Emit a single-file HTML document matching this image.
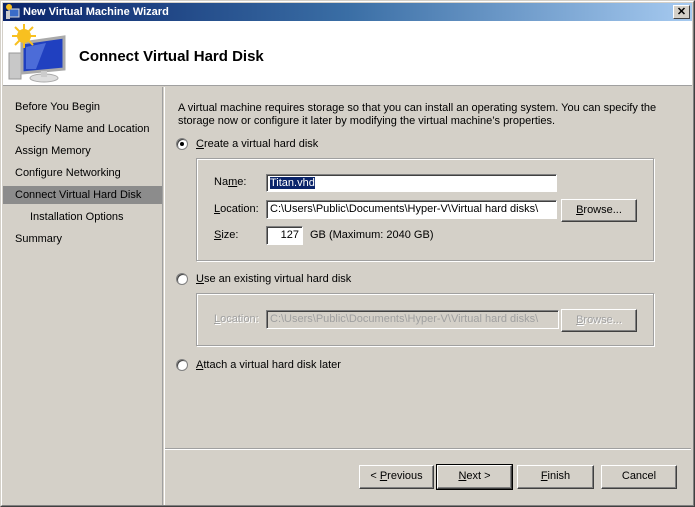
<!DOCTYPE html>
<html><head><style>
*{margin:0;padding:0;box-sizing:border-box}
body{width:695px;height:507px;background:#d4d0c8;font-family:"Liberation Sans",sans-serif;font-size:11px;color:#000;position:relative;overflow:hidden}
.a{position:absolute}
.win{left:0;top:0;width:695px;height:507px;border:1px solid #404040;border-top-color:#d4d0c8;border-left-color:#d4d0c8}
.win2{left:1px;top:1px;width:693px;height:505px;border:1px solid #808080;border-top-color:#fff;border-left-color:#fff}
.title{left:3px;top:3px;width:689px;height:18px;background:linear-gradient(90deg,#0a246a,#3a6ea5 50%,#a6caf0)}
.title span{position:absolute;left:20px;top:3px;color:#fff;font-weight:bold;font-size:11px}
.close{left:673px;top:5px;width:17px;height:14px;background:#d4d0c8;border:1px solid;border-color:#fff #404040 #404040 #fff;font-weight:bold;font-size:11px;text-align:center;line-height:12px}
.hdr{left:3px;top:21px;width:689px;height:65px;background:#fff;border-bottom:1px solid #a0a0a0}
.item{left:15px}
.sel{left:3px;top:186px;width:159px;height:18px;background:#8c8c8c}
.sep{left:162px;top:87px;width:3px;height:418px;border-left:1px solid #a0a0a0;border-right:1px solid #fff}
.grp{border:1px solid #a0a0a0;box-shadow:1px 1px 0 #fff, inset 1px 1px 0 #fff}
.inp{background:#fff;border:1px solid;border-color:#808080 #fff #fff #808080;box-shadow:inset 1px 1px 0 #404040;padding:2px 0 0 3px;white-space:nowrap;overflow:hidden}
.btn{border:1px solid;border-color:#fff #404040 #404040 #fff;box-shadow:inset -1px -1px 0 #808080;text-align:center;line-height:20px}
.radio{width:12px;height:12px;border-radius:50%;background:#fff;border:1px solid #808080;box-shadow:inset 1px 1px 0 #404040}
.radio.on::after{content:"";position:absolute;left:3px;top:3px;width:4px;height:4px;border-radius:50%;background:#000}
.dis{color:#a0a0a0;text-shadow:1px 1px 0 #fff}
u{text-decoration:underline}
</style></head><body>
<div class="a win"></div><div class="a win2"></div>
<div class="a title"><svg class="a" style="left:2px;top:1px" width="16" height="16"><rect x="4" y="5" width="10" height="8" fill="#3a6cc8" stroke="#ddd"/><rect x="1" y="7" width="4" height="8" fill="#ccc"/><circle cx="4" cy="3" r="3" fill="#f8c020"/></svg><span>New Virtual Machine Wizard</span></div>
<div class="a close">✕</div>
<div class="a hdr">
<svg class="a" style="left:3px;top:2px" width="60" height="60"><rect x="3" y="30" width="12" height="26" fill="#c8c8c8" stroke="#999"/><polygon points="16,20 58,14 58,46 16,50" fill="#2040c0" stroke="#aaa" stroke-width="3"/><polygon points="20,24 40,20 30,46 20,46" fill="#6a8ae8" opacity=".6"/><ellipse cx="38" cy="55" rx="14" ry="4" fill="#ddd" stroke="#aaa"/><rect x="35" y="48" width="6" height="6" fill="#ccc"/><circle cx="18" cy="13" r="7" fill="#f8c020"/><path d="M18 1v24M6 13h24M9 4l18 18M27 4L9 22" stroke="#f8c020" stroke-width="2"/></svg>
<div class="a" style="left:76px;top:27px;font-size:15px;font-weight:bold">Connect Virtual Hard Disk</div>
</div>
<div class="a sel"></div>
<div class="a sep"></div>
<div class="a item" style="top:101px">Before You Begin</div>
<div class="a item" style="top:123px">Specify Name and Location</div>
<div class="a item" style="top:145px">Assign Memory</div>
<div class="a item" style="top:167px">Configure Networking</div>
<div class="a item" style="top:189px">Connect Virtual Hard Disk</div>
<div class="a item" style="top:211px;left:30px">Installation Options</div>
<div class="a item" style="top:233px">Summary</div>

<div class="a" style="left:178px;top:102px;width:490px;line-height:13px">A virtual machine requires storage so that you can install an operating system. You can specify the storage now or configure it later by modifying the virtual machine’s properties.</div>

<div class="a radio on" style="left:176px;top:138px"></div>
<div class="a" style="left:196px;top:138px"><u>C</u>reate a virtual hard disk</div>
<div class="a grp" style="left:196px;top:158px;width:458px;height:103px"></div>
<div class="a" style="left:214px;top:176px">Na<u>m</u>e:</div>
<div class="a inp" style="left:266px;top:174px;width:291px;height:18px"><span style="background:#0a246a;color:#fff">Titan.vhd</span></div>
<div class="a" style="left:214px;top:203px"><u>L</u>ocation:</div>
<div class="a inp" style="left:266px;top:200px;width:291px;height:19px">C:\Users\Public\Documents\Hyper-V\Virtual hard disks\</div>
<div class="a btn" style="left:561px;top:199px;width:76px;height:23px"><u>B</u>rowse...</div>
<div class="a" style="left:214px;top:229px"><u>S</u>ize:</div>
<div class="a inp" style="left:266px;top:226px;width:37px;height:19px;text-align:right;padding-right:3px">127</div>
<div class="a" style="left:310px;top:229px">GB (Maximum: 2040 GB)</div>

<div class="a radio" style="left:176px;top:273px"></div>
<div class="a" style="left:196px;top:273px"><u>U</u>se an existing virtual hard disk</div>
<div class="a grp" style="left:196px;top:293px;width:458px;height:53px"></div>
<div class="a dis" style="left:214px;top:313px"><u>L</u>ocation:</div>
<div class="a inp dis" style="left:266px;top:310px;width:293px;height:19px;background:#d4d0c8;text-shadow:none">C:\Users\Public\Documents\Hyper-V\Virtual hard disks\</div>
<div class="a btn dis" style="left:561px;top:309px;width:76px;height:23px"><u>B</u>rowse...</div>

<div class="a radio" style="left:176px;top:359px"></div>
<div class="a" style="left:196px;top:359px"><u>A</u>ttach a virtual hard disk later</div>

<div class="a" style="left:165px;top:448px;width:526px;height:2px;border-top:1px solid #a0a0a0;border-bottom:1px solid #fff"></div>
<div class="a btn" style="left:359px;top:465px;width:75px;height:24px">&lt; <u>P</u>revious</div>
<div class="a btn" style="left:437px;top:465px;width:75px;height:24px;outline:1px solid #000"><u>N</u>ext &gt;</div>
<div class="a btn" style="left:517px;top:465px;width:77px;height:24px"><u>F</u>inish</div>
<div class="a btn" style="left:601px;top:465px;width:76px;height:24px">Cancel</div>
</body></html>
